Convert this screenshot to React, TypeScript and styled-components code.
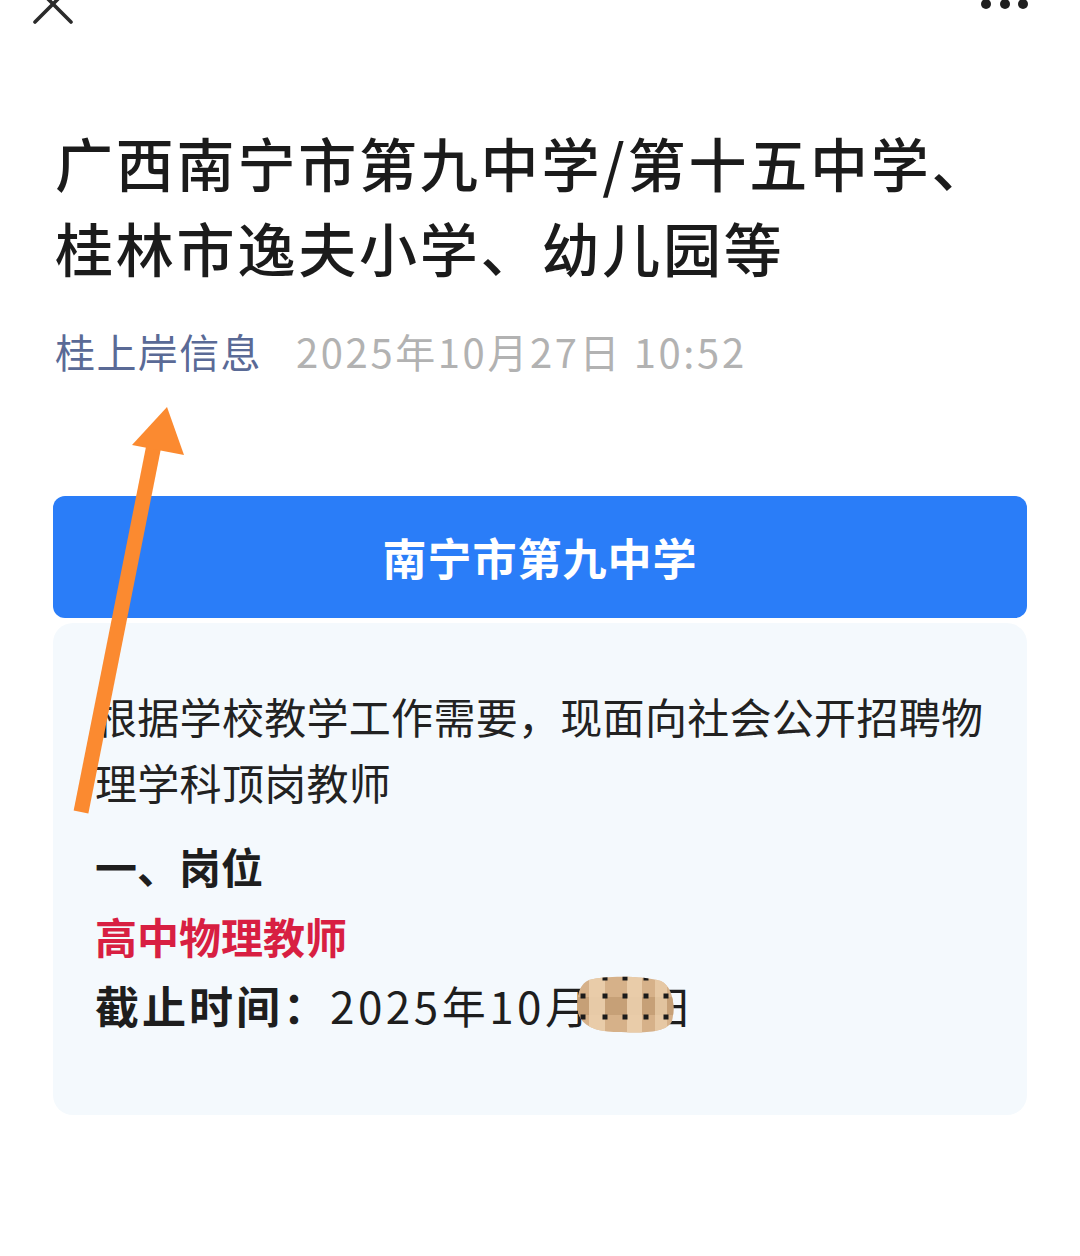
import React from 'react';
import styled, { createGlobalStyle } from 'styled-components';

const GlobalStyle = createGlobalStyle`
  html, body {
    margin: 0;
    padding: 0;
    background: #ffffff;
  }
  body {
    font-family: "Noto Sans CJK SC", "Noto Sans", sans-serif;
    color: #1b1b1b;
  }
`;

const Page = styled.div`
  position: relative;
  width: 1080px;
  min-height: 1256px;
  overflow: hidden;
  background: #ffffff;
`;

const TopBar = styled.div`
  height: 24px;
  display: flex;
  justify-content: space-between;
  align-items: flex-start;
  padding: 0 50px 0 33px;
`;

const Title = styled.h1`
  margin: 96px 0 0;
  padding: 0 55px;
  font-size: 58px;
  line-height: 85px;
  font-weight: 500;
  letter-spacing: 2.8px;
  color: #1b1b1b;
`;

const Meta = styled.div`
  display: flex;
  gap: 34px;
  margin-top: 33px;
  padding: 0 55px;
  font-size: 40px;
  line-height: 56px;
`;

const Source = styled.span`
  color: #5a6a96;
  letter-spacing: 1.4px;
`;

const Stamp = styled.span`
  color: #b2b2b2;
  letter-spacing: 2.6px;
`;

const Section = styled.section`
  margin: 117px 53px 0;
  display: flex;
  flex-direction: column;
  gap: 5px;
`;

const Banner = styled.div`
  height: 122px;
  border-radius: 12px;
  background: #2a7df8;
  display: flex;
  align-items: center;
  justify-content: center;
  color: #ffffff;
  font-size: 44px;
  font-weight: 700;
  letter-spacing: 1px;
`;

const Card = styled.div`
  background: #f4f9fd;
  border-radius: 20px;
  padding: 60px 30px 76px 42px;
  color: #222222;
`;

const Para = styled.p`
  margin: 0;
  font-size: 42px;
  line-height: 66px;
  letter-spacing: 0.3px;
`;

const Line = styled.div<{ $tone?: 'red' | 'dark'; $gap?: number }>`
  margin-top: ${p => p.$gap ?? 0}px;
  font-size: 42px;
  line-height: 70px;
  font-weight: 700;
  color: ${p => (p.$tone === 'red' ? '#d81f42' : '#1e1e1e')};
`;

const Deadline = styled.div`
  font-size: 44px;
  line-height: 68px;
  color: #1e1e1e;
`;

const Label = styled.span`
  font-weight: 700;
  letter-spacing: 3px;
`;

const Value = styled.span`
  letter-spacing: 3.5px;
`;

const Masked = styled.span`
  position: relative;
  display: inline-block;
  width: 56px;
  height: 1em;
  vertical-align: -0.1em;

  svg {
    position: absolute;
    left: -18px;
    top: 50%;
    margin-top: -31px;
  }
`;

const ArrowMark = styled.svg`
  position: absolute;
  left: 60px;
  top: 395px;
  pointer-events: none;
`;

const CloseIcon = () => (
  <svg width="40" height="24" viewBox="0 0 40 24">
    <g stroke="#2b2b2b" strokeWidth="3.6" strokeLinecap="round">
      <line x1="2" y1="22" x2="38" y2="-14" />
      <line x1="38" y1="22" x2="2" y2="-14" />
    </g>
  </svg>
);

const MoreIcon = () => (
  <svg width="52" height="12" viewBox="0 0 52 12">
    <g fill="#1f1f1f">
      <circle cx="8" cy="4" r="5" />
      <circle cx="27" cy="4" r="5" />
      <circle cx="45" cy="4" r="5" />
    </g>
  </svg>
);

const Mosaic = () => {
  const cols = [8, 30, 50, 71, 91];
  const rows = [3, 21, 42];
  return (
    <svg width="100" height="60" viewBox="0 0 100 60">
      <defs>
        <clipPath id="blob">
          <path d="M14,5 C32,0 70,1 86,6 C97,11 101,30 97,46 C92,59 62,58 42,57 C22,57 5,51 3,36 C1,22 4,9 14,5 Z" />
        </clipPath>
      </defs>
      <g clipPath="url(#blob)">
        <rect x="0" y="0" width="100" height="60" fill="#d6b189" />
        <rect x="0" y="22" width="100" height="18" fill="#c6a077" />
        <rect x="14" y="0" width="16" height="60" fill="#ecd1af" opacity="0.85" />
        <rect x="52" y="0" width="15" height="60" fill="#ecd1af" opacity="0.85" />
        <rect x="80" y="0" width="12" height="60" fill="#ecd1af" opacity="0.7" />
        {rows.map(y =>
          cols.map(x => (
            <rect key={`${x}-${y}`} x={x - 2.5} y={y - 2.5} width="5" height="5" fill="#1a1a1a" />
          ))
        )}
      </g>
    </svg>
  );
};

export default function App() {
  return (
    <>
      <GlobalStyle />
      <Page>
        <TopBar>
          <CloseIcon />
          <MoreIcon />
        </TopBar>

        <Title>广西南宁市第九中学/第十五中学、桂林市逸夫小学、幼儿园等</Title>

        <Meta>
          <Source>桂上岸信息</Source>
          <Stamp>2025年10月27日 10:52</Stamp>
        </Meta>

        <Section>
          <Banner>南宁市第九中学</Banner>
          <Card>
            <Para>根据学校教学工作需要，现面向社会公开招聘物理学科顶岗教师</Para>
            <Line $gap={16}>一、岗位</Line>
            <Line $tone="red">高中物理教师</Line>
            <Deadline>
              <Label>截止时间：</Label>
              <Value>2025年10月</Value>
              <Masked>
                <Mosaic />
              </Masked>
              <Value>日</Value>
            </Deadline>
          </Card>
        </Section>

        <ArrowMark width="140" height="430" viewBox="0 0 140 430">
          <line x1="21" y1="417" x2="94" y2="50" stroke="#fb8a30" strokeWidth="15" />
          <polygon points="107,12 72,50 124,60" fill="#fb8a30" />
        </ArrowMark>
      </Page>
    </>
  );
}
